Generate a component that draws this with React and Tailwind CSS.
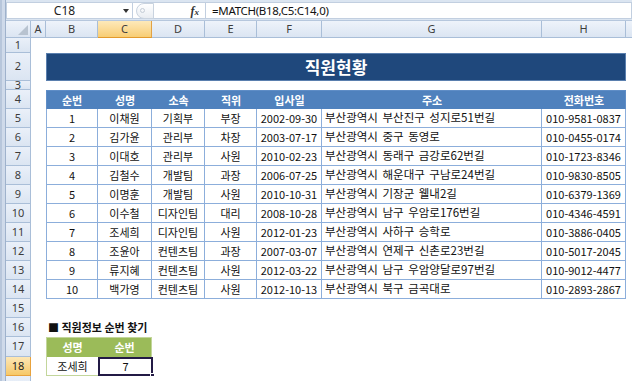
import React from "react";

const KR = "font-['Noto_Sans_CJK_KR',sans-serif]";

const data = [
  ["1", "이채원", "기획부", "부장", "2002-09-30", "부산광역시 부산진구 성지로51번길", "010-9581-0837"],
  ["2", "김가윤", "관리부", "차장", "2003-07-17", "부산광역시 중구 동영로", "010-0455-0174"],
  ["3", "이대호", "관리부", "사원", "2010-02-23", "부산광역시 동래구 금강로62번길", "010-1723-8346"],
  ["4", "김철수", "개발팀", "과장", "2006-07-25", "부산광역시 해운대구 구남로24번길", "010-9830-8505"],
  ["5", "이명훈", "개발팀", "사원", "2010-10-31", "부산광역시 기장군 웰내2길", "010-6379-1369"],
  ["6", "이수철", "디자인팀", "대리", "2008-10-28", "부산광역시 남구 우암로176번길", "010-4346-4591"],
  ["7", "조세희", "디자인팀", "사원", "2012-01-23", "부산광역시 사하구 승학로", "010-3886-0405"],
  ["8", "조윤아", "컨텐츠팀", "과장", "2007-03-07", "부산광역시 연제구 신촌로23번길", "010-5017-2045"],
  ["9", "류지혜", "컨텐츠팀", "사원", "2012-03-22", "부산광역시 남구 우암양달로97번길", "010-9012-4477"],
  ["10", "백가영", "컨텐츠팀", "사원", "2012-10-13", "부산광역시 북구 금곡대로", "010-2893-2867"],
];

const widths = ["w-[52px]", "w-[54px]", "w-[53px]", "w-[52px]", "w-[65px]", "w-[220px]", "w-[84px]"];
const headers = ["순번", "성명", "소속", "직위", "입사일", "주소", "전화번호"];

function Row({ label, h, sel, children }) {
  return (
    <div className={`flex ${h} overflow-hidden`}>
      <div
        className={`w-[25px] shrink-0 flex items-center justify-center border-r border-b font-['Noto_Sans',sans-serif] text-[11px] ${
          sel
            ? "bg-gradient-to-b from-[#fde7b5] to-[#f6c867] border-[#e8a23c] text-[#222]"
            : "bg-gradient-to-b from-[#eaf0f9] to-[#dbe5f2] border-[#a9bed8] text-[#3c3c3c]"
        }`}
      >
        {label}
      </div>
      <div className="w-[15px] shrink-0" />
      <div className="flex flex-1 min-w-0">{children}</div>
    </div>
  );
}

export default function App() {
  const cols = [
    ["A", "w-[15px]"],
    ["B", "w-[52px]"],
    ["C", "w-[54px]"],
    ["D", "w-[53px]"],
    ["E", "w-[52px]"],
    ["F", "w-[65px]"],
    ["G", "w-[220px]"],
    ["H", "w-[84px]"],
  ];
  return (
    <div className="w-[632px] h-[381px] overflow-hidden bg-white flex">
      {/* window left frame */}
      <div className="w-[6px] shrink-0 bg-[#cfdaea] border-r border-[#9fb2cc] flex">
        <div className="w-[2px] bg-[#b7c6db]" />
      </div>
      <div className="flex-1 min-w-0 flex flex-col">
        {/* formula bar */}
        <div className="h-[21px] flex bg-[#dbe5f1] pt-[2px] pb-[1px] border-b border-[#b6c7dd]">
          <div className="w-[127px] bg-white border border-[#c2cfe0] relative flex items-center justify-center font-['Noto_Sans',sans-serif] text-[12px] text-[#222]">
            <span className="-ml-[10px]">C18</span>
            <span className="absolute right-[3px] top-[6px] w-0 h-0 border-l-[3px] border-r-[3px] border-t-[4px] border-l-transparent border-r-transparent border-t-[#333]" />
          </div>
          <div className="w-[72px] bg-white border-y border-[#c2cfe0] flex items-center">
            <div className="ml-[3px] w-[18px] h-[16px] rounded-l-full border border-[#c9d3df] bg-gradient-to-b from-white to-[#e9edf2] flex items-center pl-[3px]">
              <div className="w-[5px] h-[5px] rounded-full border border-[#c4ccd6]" />
            </div>
            <div className="flex-1" />
            <span className="mr-[6px] font-['Liberation_Serif',serif] italic font-bold text-[12px] text-[#333]">
              f<span className="text-[9px]">x</span>
            </span>
          </div>
          <div className="flex-1 bg-white border border-[#c2cfe0] flex items-center pl-[6px] font-['Noto_Sans',sans-serif] text-[11.5px] tracking-[-0.3px] text-[#111]">
            =MATCH(B18,C5:C14,0)
          </div>
        </div>
        {/* column headers */}
        <div className="h-[17px] flex font-['Noto_Sans',sans-serif] text-[11px] text-[#3c3c3c]">
          <div className="w-[25px] shrink-0 bg-gradient-to-b from-[#eef3fa] to-[#dbe5f2] border-r border-b border-[#a9bed8] relative">
            <svg className="absolute right-[2px] bottom-[2px]" width="10" height="10" viewBox="0 0 10 10">
              <polygon points="10,0 10,10 0,10" fill="#b8c3d0" />
            </svg>
          </div>
          {cols.map(([c, w]) => (
            <div
              key={c}
              className={`${w} shrink-0 flex items-center justify-center border-r border-b ${
                c === "C"
                  ? "bg-gradient-to-b from-[#fde9b9] to-[#f8cd73] border-[#e2a245] border-b-[#e39a2c]"
                  : "bg-gradient-to-b from-[#eef3fa] to-[#dbe5f2] border-[#a9bed8]"
              }`}
            >
              {c}
            </div>
          ))}
          <div className="flex-1 bg-gradient-to-b from-[#eef3fa] to-[#dbe5f2] border-b border-[#a9bed8]" />
        </div>

        <div className={`flex flex-col ${KR}`}>
          <Row label="1" h="h-[15px]" />
          <Row label="2" h="h-[28px]">
            <div className="w-[580px] h-full bg-[#1f487c] border border-[#5a7fae] flex items-center justify-center text-white font-bold text-[17px]">
              직원현황
            </div>
          </Row>
          <Row label="3" h="h-[9px]" />
          <Row label="4" h="h-[19px]">
            <div className="flex w-[580px] bg-[#4f81bd] border-t border-x border-[#5f8dc6]">
              {headers.map((t, i) => (
                <div
                  key={t}
                  className={`${widths[i]} ${i === 0 ? "-ml-px" : ""} ${i === 6 ? "-mr-px" : ""} flex items-center justify-center text-white font-bold text-[11px]`}
                >
                  {t}
                </div>
              ))}
            </div>
          </Row>
          {data.map((r, ri) => (
            <Row key={ri} label={String(ri + 5)} h="h-[19px]">
              <div className="flex w-[580px]">
                {r.map((t, i) => (
                  <div
                    key={i}
                    className={`${widths[i]} shrink-0 h-full flex items-center border-r border-b border-[#8caedb] ${
                      i === 0 ? "border-l" : ""
                    } ${i === 5 ? "justify-start pl-[3px] text-[11.5px] [word-spacing:2px]" : "justify-center text-[11px]"} text-[#111] whitespace-nowrap`}
                  >
                    {t}
                  </div>
                ))}
              </div>
            </Row>
          ))}
          <Row label="15" h="h-[19px]" />
          <Row label="16" h="h-[19px]">
            <div className="flex items-center pl-[2px] text-[11px] font-bold text-[#111]">
              ■ 직원정보 순번 찾기
            </div>
          </Row>
          <Row label="17" h="h-[20px]">
            <div className="w-[52px] bg-[#9bbb59] border-t border-l border-[#c3d69b] flex items-center justify-center text-white font-bold text-[11px]">
              성명
            </div>
            <div className="w-[54px] bg-[#9bbb59] border-t border-r border-[#c3d69b] flex items-center justify-center text-white font-bold text-[11px]">
              순번
            </div>
          </Row>
          <Row label="18" h="h-[19px]" sel>
            <div className="w-[52px] h-full border-l border-b border-[#c3d69b] flex items-center justify-center text-[11px] text-[#111]">
              조세희
            </div>
            <div className="w-[55px] h-full border-2 border-[#231a45] relative flex items-center justify-center text-[11px] text-[#111]">
              7
              <span className="absolute -right-[4px] -bottom-[4px] w-[5px] h-[5px] bg-[#231a45] border border-white" />
            </div>
          </Row>
          <Row label="19" h="h-[19px]" />
        </div>
      </div>
    </div>
  );
}
